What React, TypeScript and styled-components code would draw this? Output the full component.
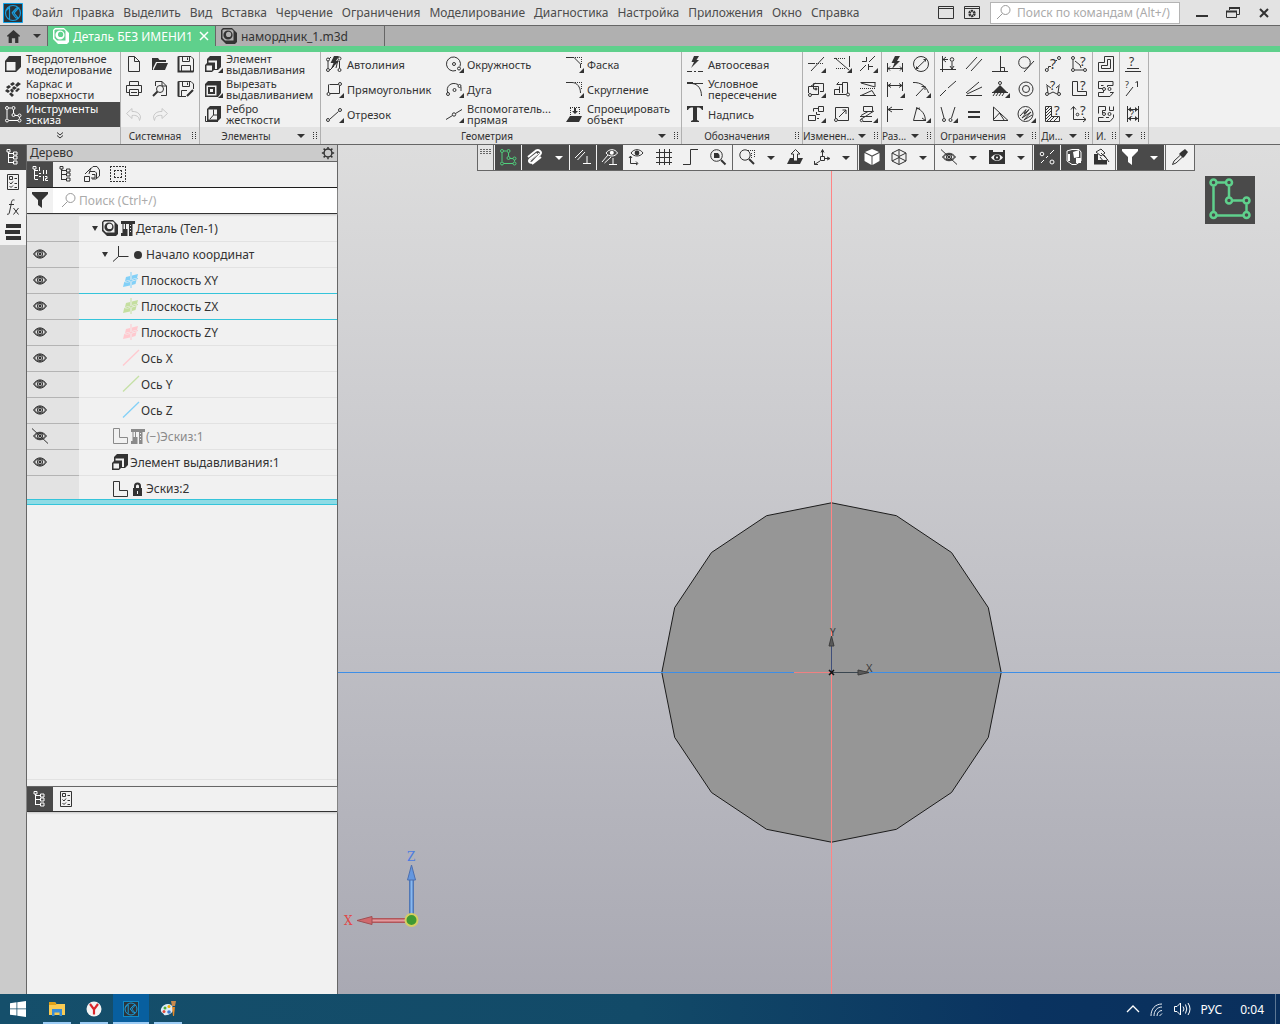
import React from "react";
import styled, { createGlobalStyle, css } from "styled-components";

const ink = "#333333";
const dark = "#4a4a4a";
const line = "#666666";
const paper = "#f1f1f1";
const green = "#5fd08c";
const cyan = "#35c4da";

const Global = createGlobalStyle`
  *, *::before, *::after { box-sizing: border-box; }
  body { margin: 0; }
  body, button, input {
    font-family: "Noto Sans", "Open Sans", sans-serif;
    font-size: 12px;
    color: ${ink};
  }
  button { padding: 0; border: 0; background: none; cursor: default; white-space: nowrap; }
  ul { margin: 0; padding: 0; list-style: none; }
  svg { display: block; flex: none; }
`;

/* ---------- icons ---------- */

const c = (x: number, y: number, r: number) =>
  `M${x - r} ${y}a${r} ${r} 0 1 0 ${2 * r} 0a${r} ${r} 0 1 0 ${-2 * r} 0`;

type Glyph = {
  s?: string;
  f?: string;
  w?: string;
  f2?: string;
  w2?: string;
  b?: string;
  dots?: string;
  dash?: string;
  more?: boolean;
  q?: [number, number, number];
};

const bolt = "M8 0H13L10 5H13L5 13L7.500 7H4.500Z";

const extrude: Glyph = {
  f: "M2 3L5 0H16V11L13 14H2Z",
  w: "M3.500 4.500H12V13H3.500Z",
  f2: "M0 9L2.500 6.500H10V13L7 16H0Z",
  w2: "M1.500 9.500H7V14.500H1.500Z",
};

const glyphs: Record<string, Glyph> = {
  solid: { f: "M0 5L4 0H16V11L11 16H0ZM1.500 6V14.500H10.500V6Z" },
  surface: { f: "M5 3L8 1L10 3L7 5ZM10 4L13 1L16 3L12 6ZM1 6L4 4L6 6L3 8ZM7 7L9 5L12 7L9 9ZM0 10L2 8L5 10L3 12ZM5 9L7 7.500L9 10L7 12ZM10 10L13 7L15 8L12 11ZM4 13L6 11.500L9 14L7 16Z" },
  sketch: { s: `M2 4V12.500M4 2H6.500M8.500 4V7.500M10 9.500H13M14.500 11V12.500M4 14.500H13${c(2, 2, 1.5)}${c(8.5, 2, 1.5)}${c(8.5, 9, 1.5)}${c(14.5, 9.5, 1.5)}${c(2, 14.5, 1.5)}${c(14.5, 14.5, 1.5)}` },
  doc: { s: "M2.500 .5H8.500L13.500 5.500V15.500H2.500ZM8.500 .5V5.500H13.500" },
  open: { f: "M0 2H6L7.500 4H14V6H4L1 12V14H0ZM5 7H16L13 14H1.500Z" },
  save: { s: "M.5 .5H13L15.500 3V15.500H.5ZM4.500 .5V5.500H11.500V.5M9.500 1.500V4M3.500 15.500V9.500H12.500V15.500", b: "M.5 .5V15.500H15.500" },
  print: { s: "M3.500 4.500V.5H12.500V4.500M3 11.500H.5V4.500H15.500V11.500H13M3.500 8.500H12.500V14.500H3.500ZM5 11.500H11" },
  preview: { s: `M3.500 5V.5H10L14.500 5V14.500H9M10 .5V5H14.500${c(8, 8, 3.5)}`, b: "M5.500 10.500L1 15" },
  saveas: { s: "M8 15.500H.5V.5H13L15.500 3V8M4.500 .5V5.500H11.500V.5M9.500 1.500V4M3.500 15.500V9.500H9", b: "M9 15L15 9M.5 .5V15.500" },
  undo: { s: "M6 2.500L.5 7.500L6 12.500V9.500C10 9 13 10 13.500 14.500C16.500 9.500 12 5 6 5.500Z" },
  redo: { s: "M10 2.500L15.500 7.500L10 12.500V9.500C6 9 3 10 2.500 14.500C-.5 9.500 4 5 10 5.500Z" },
  extrude: { ...extrude, more: true },
  extrudeNode: extrude,
  cut: { f: "M0 3L3 0H16V12L13 16H0ZM1.500 4.500V14.500H11.500V4.500ZM3 6H10V13H3ZM5 8V11H8V8Z", more: true },
  rib: { f: "M2 3L5 0H16V12L13 15H2Z", w: "M3.500 3.500H12V13.500H3.500Z", s: "M8.500 3.500V9L5 13M.5 10V15.500H13M8.500 9H12" },
  autoline: { f: bolt, s: `M2 5V12M13.500 5V12M3 3L5 1M12 4L10 12M4 14L8 10${c(2, 3.5, 1.5)}${c(13.5, 2.5, 1.5)}${c(2, 14, 1.5)}${c(13.5, 14, 1.5)}` },
  rect: { s: `M3.500 3.500H12M2.500 3.500V11.500M13.500 5V12.500H4${c(14, 3, 1.5)}${c(2.5, 13, 1.5)}`, more: true },
  segment: { s: `M4 13L12.500 5.500${c(2, 14, 1.5)}${c(14, 4, 1.5)}`, more: true },
  circle: { s: `M10 14.500a7 7 0 1 1 4-4${c(8, 8, 1.5)}${c(13, 12.5, 1.5)}`, more: true },
  arc: { s: `M2 12C-1 6 5 0 12 3.500M15 6V10${c(2, 13, 1.5)}${c(8.5, 9, 1.5)}${c(13.5, 5, 1.5)}`, more: true },
  auxline: { s: `M0 13.500L6.500 9.500M9.500 7.500L16 3.500${c(8, 8.5, 1.7)}`, more: true },
  chamfer: { s: "M0 1.500H8L14.500 8V12", dots: "M9 1.500H16M15.500 1V9", more: true },
  fillet: { s: "M0 1.500H6C11 1.500 14.500 6 14.500 12", dots: "M9 1.500H16M15.500 1V9", more: true },
  project: { f: "M4 10H16L13 16H0ZM6 5H12L9 8ZM8 2H10V5H8Z", dots: "M4.500 9V1M4 1.500H14M13.500 1V9" },
  autoaxis: { f: "M7 0H12L9.500 4H12L4 12L7 6H4.500Z", s: "M0 15.500H5M7 15.500H9M11 15.500H16" },
  intersect: { s: "M0 2.500H16M5 2.500C11 3 14.500 8 14.500 15", b: "M0 2H6" },
  text: { f: "M0 0H16V4H15C14 2 13 1.500 10 1.500V14L12 15V16H4V15L6 14V1.500C3 1.500 2 2 1 4H0Z" },
  trim: { s: "M0 7.500H7M3 15L16 1", dots: "M8 7.500H16", more: true },
  extend: { s: "M1 2L15 14M15.500 0V11", dots: "M0 2.500H12M2 12.500H12", more: true },
  split: { s: "M0 15L6 9M9 6L15 0M6.500 1V5.500H2M8 10.500H13M8.500 14V8", more: true },
  move: { s: `M.5 5.500H10.500V13.500H3M.5 5.500V12M5.500 2.500H15.500V10.500H12M5.500 2.500V8H9M3 5L8 2${c(2, 14, 1.5)}${c(8, 8, 1)}`, more: true },
  scalec: { s: `M0 13.500H12M.5 13V8.500H5M5.500 12V5.500M8.500 12V1.500H13.500V12M3 3.500H8M5 1L2.500 3.500${c(14, 13.5, 1.5)}` },
  mirror: { s: "M.5 1.500H15.500M1 2L15 6V1.500M1 14.500L12 9.500L15 14.500ZM0 14.500H16", dots: "M0 7.500H16" },
  copy: { s: "M5.500 5.500V2.500H10M10.500 .5H15.500V5.500H10.500ZM8.500 6V8.500H12M.5 9.500H7.500V14.500H.5ZM9 12.500H11", more: true },
  scale: { s: `M1.500 12V1.500H14.500V14.500H4M5 11L12 4M8.500 4H12V8${c(2, 14, 1.5)}` },
  deform: { s: `M3.500 5V.5H12.500V5.500H3.500M3 15.500H12M.5 13.500L14 5M0 10.500H12M1 9.500L8 5.500${c(1.5, 14.5, 1.2)}`, more: true },
  autodim: { f: bolt, s: "M.5 7V16M15.500 7V16M1 12.500H15M3 10.500L1 12.500L3 14.500M13 10.500L15 12.500L13 14.500" },
  diameter: { s: `${c(8, 8, 7.5)}M2.500 13.500L14 2.500M3.500 12.500H5.500M3.500 12.500V10.500M12.500 3.500H10.500M12.500 3.500V5.500` },
  lindim: { s: "M.5 1V16M15.500 1V10M1 4.500H15M4 2.500L1 4.500L4 6.500M12 2.500L15 4.500L12 6.500", more: true },
  raddim: { s: "M0 1.500C8 1 14 6 15.500 12M3 15L12 5.500M8.500 5.500H12V9", more: true },
  orddim: { s: "M.5 0V16M1 3.500H16M5 1L1 3.500L5 6" },
  angdim: { s: "M4 1L.5 14.500H13M3.500 2C9 4 12 8 12.500 14.500L9 12M3 3L7 2", more: true },
  coord: { s: `M2.500 0V16M0 13.500H16M3 3.500H8M6 1L3 3.500L6 6M12 6V13M10 10L12 13L14 10${c(12, 3.5, 1.8)}` },
  parallel: { s: "M0 13L11 1M5 15L16 3" },
  perp: { s: "M8.500 0V15M0 15.500H16M9 11.500H12.500V15" },
  tangent: { s: `${c(6.5, 6.5, 5.8)}M6 16L16 5` },
  collinear: { s: "M0 15L6 9M8 7L16 0" },
  merge: { s: "M0 12L13 1M1 13L16 6M0 14.500H16" },
  fix: { f: "M8 4L15 11H1Z", s: `M0 11.500H16M3 12L1 15M6 12L4 15M9 12L7 15M12 12L10 15${c(8, 2, 1.5)}`, more: true },
  concentric: { s: `${c(8, 8, 7)}${c(8, 8, 3.5)}` },
  symmetric: { s: `M1 1L4 12M15 1L11.500 12${c(4, 14, 1.5)}${c(10.5, 14, 1.5)}`, more: true },
  equal: { f: "M2 5H14V7H2ZM2 10H14V12H2Z" },
  bisect: { s: "M1.500 1V14.500H16L1.500 1M1 14L7.500 7L12 14" },
  pattern: { s: `${c(7.5, 8, 7.5)}M2 10L8 3.500L6 8L11 3.500L4 12L13 6L6 14L14 9`, more: true },
  qdist: { s: `M3.500 12.500V10.500H6M12 4.500H10.500${c(1.8, 14, 1.5)}${c(14, 2, 1.5)}`, q: [5, 13, 14] },
  qang: { s: `M2 4V12M4 5L9 9L10 12M4 14H12${c(2, 2, 1.5)}${c(2, 14, 1.5)}${c(14, 14, 1.5)}`, q: [9, 10, 13] },
  qcurve: { s: `M2 5L3 12M14 5L13 12M4 13L8 11L12 13M1 3.500L6 7M15 3.500L11 7${c(2, 13, 1.5)}${c(14, 13, 1.5)}`, q: [5, 9, 12] },
  qlen: { s: "M1.500 .5H6.500V10.500H15.500V14.500H1.500Z", q: [9, 9, 13] },
  qarea: { s: "M.5 .5H6.500V10.500H14.500V15.500H.5ZM1 4L4 1M1 7L6 2M1 10L6 5M1 13L6 8M2 15L7 10M5 15L9 11M9 15L13 11", q: [9, 9, 13] },
  qcent: { s: `M2.500 1V13.500H15M0 3.500L2.500 .5L5 3.500M12 11L15 13.500L12 16${c(6.5, 8.5, 1.3)}`, q: [9, 9, 13] },
  contour: { s: "M6.500 .5H15.500V15.500H.5V6.500H6.500ZM9.500 3.500H12.500V12.500H3.500V9.500H9.500Z" },
  contour2: { s: `M.5 .5H15V4.500H9.500V6M.5 .5V7.500H5M.5 15.500H12L15.500 11.500H12M5.500 4.500H3M.5 15.500V11.500H5.500V9${c(6, 8, 1.5)}${c(11.5, 8, 1.5)}` },
  contour3: { s: `M.5 7.500V.5H7.500V4.500H4.500V7M11.500 .5V4.500H15.500V.5M.5 15.500H12L15.500 11.500V8.500M.5 15.500V11.500H5.500M8 11.500H11${c(6, 8, 1.5)}${c(11.5, 8, 1.5)}` },
  quality: { s: "M2 12.500H14M0 15.500H16", q: [4, 10, 12] },
  fraction: { s: "M1 15L8 6M10.500 1.500L12.500 .5V6", q: [0, 7, 9] },
  qdim: { s: "M2.500 0V16M13.500 0V16M3 3.500H13M3 12.500H13", f: "M3 12.500L6 10V15ZM13 12.500L10 10V15ZM3 3.500L6 1V6ZM13 3.500L10 1V6Z", q: [5, 11, 9] },
  tree: { s: "M3.500 3V14M4 4.500H8M4 8.500H8M4 13.500H8M2 .5H5V3H2ZM8.500 3H12V6H8.500ZM8.500 7H12V10H8.500ZM8.500 12H12V15H8.500Z" },
  treenum: { s: "M2.500 3V13.500M3 4.500H6M3 9.500H6M3 13.500H6M1 .5H4V3H1ZM7.500 1V5M7 7.500H9M7 10.500H9M11.500 4V8M14.500 4V8M11.500 10V15M13 10.500H15V12.500H13.500V14.500H16" },
  props: { s: "M2.500 .5H13.500V15.500H2.500ZM4.500 2.500H7.500V5.500H4.500ZM9.500 4.500H12M4.500 8.500L6 10L8 7.500M9.500 9.500H12M4.500 12L6 13.500L8 11.500M9.500 13.500H12" },
  fx: { s: "M9.500 1C6.500 0 6.500 3 6 6L4.500 13C4 15 3.500 16 2 15M4 5.500H9M8.500 9L13.500 15.500M13.500 9L8.500 15.500" },
  stack: { f: "M1 0H16V4H1ZM0 6H15V10H0ZM1 12H16V16H1Z" },
  parts: { s: "M.5 10.500H5.500V15.500H.5ZM5 8L6.500 3L9 .5H13L15.500 4V10L12 13H8M5.500 5.500H11L12.500 7V12M1 8L7 2M8 8.500H11V12H7" },
  dashsq: { dots: "M0 .5H16M0 15.500H16M.5 0V16M15.500 0V16M4 4.500H12M4 11.500H12M4.500 4V12M11.500 4V12", dash: "2 1" },
  filter: { f: "M0 0H16V2L10 8V16L6 13V8L0 2Z" },
  mag: { s: `${c(9.5, 6, 4.5)}M6.500 9.500L1 15` },
  gear: { b: `${c(9, 8, 4.5)}M9 1V3.500M9 12.500V15M2 8H4.500M13.500 8H16M4 3L6 5M12 11L14 13M14 3L12 5M6 11L4 13` },
  eye: { f: c(8, 8, 3), w: c(8, 8, 2), f2: c(8, 8, 1.4), s: "M1.500 8C5 2.500 11 2.500 14.500 8C11 13.500 5 13.500 1.500 8ZM2.500 8C5 3.500 11 3.500 13.500 8C11 12.500 5 12.500 2.500 8Z" },
  noeye: { f: c(8, 8, 3), w: c(8, 8, 2), f2: c(8, 8, 1.4), s: "M1.500 8C5 3 11 3 14.500 8C11 13 5 13 1.500 8ZM2.500 8C5 4 11 4 13.500 8C11 12 5 12 2.500 8ZM0 .5L16 15.500" },
  part: { f: "M2 0H11L16 5V14L14 16H5L0 11V2Z", w: "M2.500 1.500H11L12.500 3V12.500H4L1.500 10V2.500Z", f2: c(7, 7, 4.6), w2: c(7.6, 6.4, 2.6) },
  frame: { f: "M1 1H15V4H12.500V16H9V4H6V9H7.500V16H1V13H2.500V4H1Z", w: "M10 5H11V6H10ZM10 8H11V9H10ZM10 11H11V12H10ZM3.500 4H5V9H3.500Z" },
  origin: { s: "M6.500 0V10.500H16.500M6.500 10.500L1 15.500" },
  lsketch: { s: "M1.500 .5H7.500V9.500H15.500V15.500H1.500Z" },
  lock: { f: "M3 7H12V15H3Z", b: "M5 8V5a2.500 2.500 0 0 1 5 0V8", w: "M7 10H8V13H7Z" },
  paperclip: { b: "M1 8L9 1.500C12 0 15 3 13.500 5L6 13C3 15 .5 12 3 10L10 4.500M5 15L14 8", s: "M3 12L12 4" },
  constraints: { s: "M0 9L8 1M2.500 11L10 3M12 7V14.500M8 14.500H16" },
  coneye: { s: "M0 13L6 6M2.500 14L9 8M4 4C7-.5 13-.5 15.500 4C13 8 7 8 4 4ZM11 9V15.500M7 15.500H15", f: c(9.8, 3.8, 2) },
  axiseye: { s: "M2 4C5-.5 11-.5 14 4C11 8 5 8 2 4ZM1.500 7V14.500H8M0 9L1.500 7L3 9M7 12.500L9 14.500L7 16", f: c(8, 4, 2.4) },
  grid: { s: "M3.500 0V16M8.500 0V16M13.500 0V16M0 3.500H16M0 8.500H16M0 13.500H16" },
  ortho: { s: "M0 15.500H7.500V.5H15" },
  zoomfit: { s: c(6.5, 6.5, 5.8), b: "M11 11L15.500 15.500", f: "M4 4H8L9.500 6V9H4Z" },
  zoomsel: { s: c(6, 6, 5.2), b: "M10 10L15 15", dots: "M9 1.500H16M15.500 1V9M12.500 4V10" },
  normal: { f: "M3 9H16L13 15H0Z", w: "M7 5H10V12H7Z", s: "M6.500 12V5H4L8.500 .5L13 5H10.500V12Z" },
  axes: { s: "M6.500 7.500H10.500V11.500H6.500ZM8.500 7V1M7 3.500L8.500 .5L10 3.500M11 9.500H15.500M13 8L16 9.500L13 11M6 12L.5 15.500M.5 12V15.500H4" },
  cubewhite: { f: "M8 0L15 3L8 6.500L1 3ZM.5 4L7.500 7.500V16L.5 12ZM8.500 7.500L15.500 4V12L8.500 16Z" },
  wirecube: { s: "M8 .5L15 4V12L8 15.500L1 12V4ZM1 4L8 7.500L15 4M8 7.500V15.500M8 .5V7M1 12L8 8.500L15 12" },
  eyeframe: { f: "M0 1H4V3H14V1H16V15H0Z", w: "M2 8.500C5 4 11 4 14 8.500C11 13 5 13 2 8.500Z", b: c(8, 8.5, 2) },
  points: { s: `M2 14L5 11M7 9L9 7M11 5L15 1${c(3, 5, 1.8)}${c(13, 13, 2)}` },
  solids: { s: "M1 2L6 .5H13L15 3V12L10 15.500H6L1 12Z", f: "M7 3L13 1V8L8 9ZM10 9H15V14H10ZM2 5H4V12H2Z" },
  hatched: { f: "M1 5H5V11H14V15.500H1Z", s: "M3 3L8 0L12 4L8 7ZM8 4L15 11M11 6L16 13M7 8L11 13" },
  dropper: { f: "M9 3L13 0L16 3L13 7L11 9L7 5Z", s: "M8.500 6L2 12L.5 15.500L4 14L10.500 8" },
  house: { f: "M0 7L8 0L16 7V8H14V16H10V10H6V16H2V8H0Z" },
};

const Svg = styled.svg<{ $slim?: boolean }>`
  width: ${(p) => (p.$slim ? 16 : 18)}px;
  height: 17px;
  overflow: visible;
`;

type IconProps = { name: string; color?: string; hole?: string; slim?: boolean };

function Icon({ name, color = ink, hole = paper, slim }: IconProps) {
  const g = glyphs[name];
  return (
    <Svg viewBox={slim ? "0 0 16 17" : "0 0 18 17"} aria-hidden="true" $slim={slim}>
      {g.f && <path d={g.f} fill={color} fillRule="evenodd" />}
      {g.w && <path d={g.w} fill={hole} />}
      {g.f2 && <path d={g.f2} fill={color} />}
      {g.w2 && <path d={g.w2} fill={hole} />}
      {g.s && <path d={g.s} fill="none" stroke={color} />}
      {g.b && <path d={g.b} fill="none" stroke={color} strokeWidth="2" />}
      {g.dots && <path d={g.dots} fill="none" stroke={color} strokeDasharray={g.dash ?? "1 1"} />}
      {g.q && (
        <text x={g.q[0]} y={g.q[1]} fontSize={g.q[2]} fill={color}>?</text>
      )}
      {g.more && <path d="M18 12V17H13Z" fill={ink} />}
    </Svg>
  );
}

function Logo({ size }: { size: number }) {
  return (
    <svg width={size} height={size} viewBox="0 0 20 20" aria-hidden="true">
      <path d="M.5 .5H19.500V19.500H.5Z" fill="#2c3338" stroke="#12a4ea" />
      <path d={`${c(10, 10, 7.5)}M6.500 4V16M9 10L13.500 5H15.500L11 10L15 15H13L9 10M2.500 8L6 5`} fill="none" stroke="#199fe0" strokeWidth="1.200" />
    </svg>
  );
}

const Caret = styled.span<{ $light?: boolean }>`
  width: 0;
  height: 0;
  border: 4px solid transparent;
  border-top-color: ${(p) => (p.$light ? "#ffffff" : ink)};
  border-bottom-width: 0;
`;

/* ---------- top bars ---------- */

const Page = styled.div`
  display: flex;
  flex-direction: column;
  min-height: 100vh;
  background: ${paper};
`;

const MenuBar = styled.header`
  display: flex;
  align-items: center;
  height: 26px;
  padding: 0 8px 0 3px;
  background: #e3e3e3;
  border-bottom: 1px solid ${line};
`;

const Menu = styled.nav`
  display: flex;
  flex: 1;
  gap: 9px;
  padding-left: 9px;
  button { color: #4c4c4c; line-height: 16px; }
`;

const WindowTools = styled.div`
  display: flex;
  align-items: center;
  gap: 10px;
`;

const CommandSearch = styled.label`
  display: flex;
  align-items: center;
  gap: 3px;
  width: 190px;
  height: 22px;
  padding-left: 5px;
  background: #fff;
  border: 1px solid #b4b4b4;
`;

const PlainInput = styled.input`
  flex: 1;
  min-width: 0;
  padding: 0;
  border: 0;
  outline: 0;
  background: transparent;
  &::placeholder { color: #ababab; opacity: 1; }
`;

const WindowButtons = styled.div`
  display: flex;
  gap: 15px;
  padding-left: 4px;
`;

const TabBar = styled.div`
  display: flex;
  height: 20px;
  background: #b0b0b0;
`;

const HomeTab = styled.div`
  display: flex;
  align-items: center;
  gap: 12px;
  width: 48px;
  padding-left: 6px;
  border-right: 1px solid ${line};
`;

const Tab = styled.div<{ $active?: boolean }>`
  display: flex;
  align-items: center;
  gap: 2px;
  width: ${(p) => (p.$active ? 168 : 169)}px;
  padding: 0 5px;
  border-right: 1px solid ${line};
  color: ${(p) => (p.$active ? "#ffffff" : ink)};
  background: ${(p) => (p.$active ? green : "transparent")};
  button { color: inherit; }
  button:first-of-type { flex: 1; text-align: left; }
`;

const GreenStrip = styled.div`
  height: 6px;
  background: ${green};
`;

/* ---------- ribbon ---------- */

const Ribbon = styled.div`
  display: flex;
  height: 93px;
  background: linear-gradient(${paper} 75px, #e3e3e3 75px);
  border-bottom: 1px solid ${line};
`;

const Group = styled.section`
  display: flex;
  flex-direction: column;
  border-right: 1px solid #b0b0b0;
`;

const Cells = styled.div<{ $cols: number; $cell: number }>`
  display: grid;
  grid-auto-flow: column;
  grid-template-rows: repeat(3, 25px);
  grid-template-columns: repeat(${(p) => p.$cols}, ${(p) => p.$cell}px);
`;

const Cell = styled.button<{ $active?: boolean }>`
  display: flex;
  align-items: center;
  gap: 3px;
  padding-left: 5px;
  text-align: left;
  font-size: 11px;
  line-height: 11px;
  ${(p) => p.$active && css`
    color: #fff;
    background: ${dark};
  `}
`;

const CellLabel = styled.span`
  padding-bottom: 1px;
  white-space: pre;
`;

const GroupFoot = styled.div`
  display: flex;
  align-items: center;
  height: 17px;
  font-size: 10px;
  line-height: 16px;
`;

const FootLabel = styled.span`
  flex: 1;
  width: 0;
  min-width: 0;
  text-align: center;
  white-space: nowrap;
`;

const FootMenu = styled.button`
  display: flex;
  flex: none;
  justify-content: center;
  width: 18px;
`;

const GripSvg = styled.svg`
  width: 10px;
  height: 8px;
`;

function Grip() {
  return (
    <GripSvg viewBox="0 0 10 8" aria-hidden="true">
      <path d="M3.500 0V8M6.500 0V8" stroke={ink} strokeDasharray="1 1" fill="none" />
    </GripSvg>
  );
}

type Item = [icon: string, label: string, hidden?: boolean];
type GroupData = { title: string; cols: number; cell: number; menu: boolean; items: Item[] };

const quiet = (labels: string) => labels.split(" ").map((n): Item => [n, n, true]);

const groups: GroupData[] = [
  { title: "Системная", cols: 3, cell: 26, menu: false, items: quiet("doc print undo open preview redo save saveas") },
  { title: "Элементы", cols: 1, cell: 120, menu: true, items: [["extrude", "Элемент\nвыдавливания"], ["cut", "Вырезать\nвыдавливанием"], ["rib", "Ребро\nжесткости"]] },
  {
    title: "Геометрия", cols: 3, cell: 120, menu: true,
    items: [
      ["autoline", "Автолиния"], ["rect", "Прямоугольник"], ["segment", "Отрезок"],
      ["circle", "Окружность"], ["arc", "Дуга"], ["auxline", "Вспомогатель...\nпрямая"],
      ["chamfer", "Фаска"], ["fillet", "Скругление"], ["project", "Спроецировать\nобъект"],
    ],
  },
  { title: "Обозначения", cols: 1, cell: 120, menu: false, items: [["autoaxis", "Автоосевая"], ["intersect", "Условное\nпересечение"], ["text", "Надпись"]] },
  { title: "Изменен...", cols: 3, cell: 26, menu: true, items: quiet("trim move copy extend scalec scale split mirror deform") },
  { title: "Раз...", cols: 2, cell: 26, menu: true, items: quiet("autodim lindim orddim diameter raddim angdim") },
  { title: "Ограничения", cols: 4, cell: 26, menu: true, items: quiet("coord collinear symmetric parallel merge equal perp fix bisect tangent concentric pattern") },
  { title: "Ди...", cols: 2, cell: 26, menu: true, items: quiet("qdist qcurve qarea qang qlen qcent") },
  { title: "И.", cols: 1, cell: 26, menu: false, items: quiet("contour contour2 contour3") },
  { title: "", cols: 1, cell: 26, menu: true, items: quiet("quality fraction qdim") },
];

function RibbonGroup({ g }: { g: GroupData }) {
  return (
    <Group>
      <Cells $cols={g.cols} $cell={g.cell}>
        {g.items.map(([icon, label, hidden]) => {
          const off = icon === "undo" || icon === "redo";
          return (
            <Cell key={icon} disabled={off} aria-label={hidden ? label : undefined}>
              <Icon name={icon} color={off ? "#c9c9c9" : ink} />
              {!hidden && <CellLabel>{label}</CellLabel>}
            </Cell>
          );
        })}
      </Cells>
      <GroupFoot>
        {g.title ? <FootLabel>{g.title}</FootLabel> : null}
        {g.menu && <FootMenu aria-label="menu"><Caret /></FootMenu>}
        <Grip />
      </GroupFoot>
    </Group>
  );
}

/* ---------- workspace ---------- */

const Work = styled.main`
  display: flex;
  flex: 1;
`;

const Rail = styled.aside`
  display: flex;
  flex-direction: column;
  width: 26px;
  background: #cbcbcb;
`;

const RailButton = styled.button<{ $active?: boolean }>`
  display: flex;
  align-items: center;
  height: 25px;
  padding-left: 5px;
  background: ${(p) => (p.$active ? dark : paper)};
`;

const Panel = styled.section`
  display: flex;
  flex-direction: column;
  width: 312px;
  border: solid ${line};
  border-width: 0 1px;
`;

const PanelTitle = styled.div`
  display: flex;
  align-items: center;
  justify-content: space-between;
  height: 17px;
  padding-left: 3px;
  line-height: 16px;
  background: #cbcbcb;
  border-bottom: 1px solid ${line};
`;

const PanelTools = styled.div`
  display: flex;
  height: 26px;
  border-bottom: 1px solid #111;
`;

const PanelTool = styled.button<{ $active?: boolean }>`
  display: flex;
  align-items: center;
  width: 26px;
  padding-left: 5px;
  background: ${(p) => (p.$active ? dark : "transparent")};
`;

const SearchRow = styled.div`
  display: flex;
  height: 26px;
  border-bottom: 1px solid ${ink};
  box-shadow: 0 1px 2px #c4c4c4;
  label {
    display: flex;
    flex: 1;
    align-items: center;
    padding-left: 8px;
    background: #fff;
  }
`;

const Tree = styled.ul`
  padding-top: 2px;
  border-bottom: 4px solid #8edbe5;
  box-shadow: 0 1px 0 ${cyan};
`;

const EyeCell = styled.button`
  display: flex;
  align-items: center;
  width: 52px;
  padding: 0 0 0 5px;
  background: #e3e3e3;
  border-bottom: 1px solid #b4b4b4;
`;

const NodeCell = styled.div<{ $indent: number }>`
  display: flex;
  flex: 1;
  align-items: center;
  padding-left: ${(p) => p.$indent}px;
  border-bottom: 1px solid;
  line-height: 16px;
  white-space: nowrap;
`;

const Row = styled.li<{ $mark?: boolean; $dim?: boolean }>`
  display: flex;
  height: 26px;
  color: ${(p) => (p.$dim ? "#8a8a8a" : ink)};
  > ${NodeCell} { border-bottom-color: ${(p) => (p.$mark ? cyan : "#e2e2e2")}; }
  &:last-child { height: 24px; }
  &:last-child > * { padding-top: 3px; border-bottom-color: ${cyan}; }
`;

const Twist = styled(Caret)`
  border-width: 5px 3px 0;
  margin-right: 4px;
`;

const Bullet = styled.span`
  width: 8px;
  height: 8px;
  margin: 0 4px;
  border-radius: 50%;
  background: ${ink};
`;

const Spacer = styled.div`
  flex: 1;
  border-bottom: 1px solid #e2e2e2;
`;

const LowerTools = styled(PanelTools)`
  margin-top: 6px;
  border-top: 1px solid ${line};
  border-bottom-color: ${ink};
  box-shadow: 0 1px 2px #c4c4c4;
`;

const Lower = styled.div`
  height: 182px;
`;

function Plane({ color }: { color: string }) {
  return (
    <Svg viewBox="0 0 18 17" aria-hidden="true">
      <path d="M3 5L7 4V8L2 9ZM9 3.500L15 2L14 6L9 7ZM1 11L7 10V13.500L0 15ZM9 9.500L13.500 8L12.500 12L9 13Z" fill={color} />
      <path d="M8 0V16M1 10.500L15 6.500" stroke={color} />
    </Svg>
  );
}

function Axis({ color }: { color: string }) {
  return (
    <Svg viewBox="0 0 18 17" aria-hidden="true">
      <path d="M0 15.500L16 0" stroke={color} strokeWidth="1.300" />
    </Svg>
  );
}

type Node = { label: string; indent: number; eye?: "eye" | "noeye"; open?: boolean; mark?: boolean; dim?: boolean; art: React.ReactNode };

const nodes: Node[] = [
  { label: "Деталь (Тел-1)", indent: 13, open: true, art: <><Icon name="part" /><Icon name="frame" slim /></> },
  { label: "Начало координат", indent: 23, eye: "eye", open: true, art: <><Icon name="origin" /><Bullet /></> },
  { label: "Плоскость XY", indent: 44, eye: "eye", mark: true, art: <Plane color="#82d0f7" /> },
  { label: "Плоскость ZX", indent: 44, eye: "eye", mark: true, art: <Plane color="#c5dfa0" /> },
  { label: "Плоскость ZY", indent: 44, eye: "eye", art: <Plane color="#ffc9cf" /> },
  { label: "Ось X", indent: 44, eye: "eye", art: <Axis color="#ffc9cf" /> },
  { label: "Ось Y", indent: 44, eye: "eye", art: <Axis color="#c5e0a5" /> },
  { label: "Ось Z", indent: 44, eye: "eye", art: <Axis color="#82d0f7" /> },
  { label: "(−)Эскиз:1", indent: 33, eye: "noeye", dim: true, art: <><Icon name="lsketch" color="#8a8a8a" /><Icon name="frame" color="#8a8a8a" slim /></> },
  { label: "Элемент выдавливания:1", indent: 33, eye: "eye", art: <Icon name="extrudeNode" /> },
  { label: "Эскиз:2", indent: 33, art: <><Icon name="lsketch" /><Icon name="lock" slim /></> },
];

/* ---------- viewport ---------- */

const Viewport = styled.section`
  position: relative;
  flex: 1;
  min-width: 0;
  overflow: hidden;
  background: linear-gradient(#dddddd, #a9a9b3);
`;

const Scene = styled.svg`
  position: absolute;
  inset: 0;
  width: 100%;
  height: 100%;
`;

const ViewBar = styled.div`
  position: absolute;
  top: 0;
  left: 139px;
  display: flex;
  height: 26px;
  background: ${paper};
  border: solid ${line};
  border-width: 0 0 1px 1px;
`;

const ViewGroup = styled.div`
  display: flex;
  gap: 1px;
  padding: 0 1px;
  border-right: 1px solid ${line};
`;

const ViewGrip = styled.div`
  width: 16px;
  padding: 4px 0 0 2px;
  background: #e3e3e3;
  border-right: 1px solid ${line};
`;

const ViewTool = styled.div<{ $on?: boolean }>`
  display: flex;
  background: ${(p) => (p.$on ? dark : "transparent")};
  button { display: flex; align-items: center; }
  button:first-child { width: 26px; padding: 0 0 1px 5px; }
  button:nth-child(2) { width: 21px; justify-content: center; }
`;

type ViewItem = { n: string; on?: boolean; dd?: boolean; color?: string };
const viewGroups: ViewItem[][] = [
  [{ n: "sketch", on: true, color: "#4fd07c" }, { n: "paperclip", on: true, dd: true }, { n: "constraints", on: true }, { n: "coneye", on: true }, { n: "axiseye" }, { n: "grid" }, { n: "ortho" }, { n: "zoomfit" }],
  [{ n: "zoomsel", dd: true }, { n: "normal" }, { n: "axes", dd: true }],
  [{ n: "cubewhite", on: true }, { n: "wirecube", dd: true }],
  [{ n: "noeye", dd: true }, { n: "eyeframe", dd: true }],
  [{ n: "points", on: true }, { n: "solids", on: true }, { n: "hatched" }],
  [{ n: "filter", on: true, dd: true }],
  [{ n: "dropper" }],
];

const SketchMode = styled.button`
  position: absolute;
  top: 31px;
  right: 25px;
  width: 50px;
  height: 48px;
  background: ${dark};
`;

const ngon = Array.from({ length: 16 }, (_, i) => {
  const a = (i * Math.PI) / 8;
  return `${(493.5 + 169.7 * Math.sin(a)).toFixed(1)},${(527.5 - 169.7 * Math.cos(a)).toFixed(1)}`;
}).join(" ");

function Drawing() {
  return (
    <Scene viewBox="0 0 942 849" preserveAspectRatio="xMidYMid slice" role="img" aria-label="Модель">
      <polygon points={ngon} fill="#969696" stroke="#1c1c1c" />
      <path d="M493.500 0V849" stroke="#ff8484" />
      <path d="M-500 527.500H1500" stroke="#3d8ee6" />
      <path d="M456 527.500H493" stroke="#f08080" />
      <path d="M493.500 527V492" stroke="#3f4f7a" />
      <path d="M493.500 527.500H530" stroke="#3a4650" />
      <path d="M493.500 491L496 501H491ZM531 527.500L520 525V530Z" fill="#5a5a5a" stroke="#3c3c3c" />
      <path d="M491 525L496 530M491 530L496 525" stroke="#111" strokeWidth="1.500" />
      <text x="492" y="491" fontSize="10" fill="#3c3c3c">Y</text>
      <text x="528" y="527" fontSize="11" fill="#3c3c3c">X</text>
      <path d="M73.500 774V732" stroke="#5077b5" strokeWidth="5" />
      <path d="M73.500 774V732" stroke="#86b8f0" strokeWidth="2" />
      <path d="M73.500 720L77.500 735H69.500Z" fill="#6497e0" stroke="#4d6fae" />
      <path d="M70 775.500H34" stroke="#b0565b" strokeWidth="5" />
      <path d="M70 775.500H34" stroke="#e59a9e" strokeWidth="2" />
      <path d="M19 775.500L34 771.500V779.500Z" fill="#d0686c" stroke="#a04f53" />
      <circle cx="73.500" cy="775" r="6" fill="#3f9a33" stroke="#d5cf62" strokeWidth="2" />
      <text x="69" y="716" fontSize="12" fill="#4d7ce0" fontFamily="DejaVu Serif, serif">Z</text>
      <text x="6" y="780" fontSize="12" fill="#e04848" fontFamily="DejaVu Serif, serif">X</text>
    </Scene>
  );
}

/* ---------- taskbar ---------- */

const TaskBar = styled.footer`
  display: flex;
  align-items: center;
  height: 30px;
  background: linear-gradient(90deg, #154f6b, #124a68 50%, #0a3360 80%, #0a2f5c);
  color: #fff;
`;

const Task = styled.button<{ $state?: "run" | "active" | "start" }>`
  display: flex;
  align-items: center;
  justify-content: center;
  width: 36px;
  height: 30px;
  margin-right: ${(p) => (p.$state === "start" ? 3 : 1)}px;
  background: ${(p) => (p.$state === "active" ? "#085f9f" : "transparent")};
  ${(p) => p.$state !== "start" && css`
    background-image: linear-gradient(#9cccf5, #9cccf5);
    background-size: ${p.$state === "active" ? 36 : 28}px 2px;
    background-position: center bottom;
    background-repeat: no-repeat;
  `}
`;

const Tray = styled.div`
  display: flex;
  align-items: center;
  gap: 10px;
  height: 100%;
  margin-left: auto;
  margin-right: 4px;
  padding-right: 11px;
  border-right: 1px solid #5c7794;
  button, time { color: #fff; font-size: 12px; }
  time { padding-left: 8px; }
`;

export default function App() {
  return (
    <Page>
      <Global />
      <MenuBar>
        <Logo size={20} />
        <Menu>
          {["Файл", "Правка", "Выделить", "Вид", "Вставка", "Черчение", "Ограничения", "Моделирование", "Диагностика", "Настройка", "Приложения", "Окно", "Справка"].map((m) => (
            <button key={m}>{m}</button>
          ))}
        </Menu>
        <WindowTools>
          <button aria-label="Окно">
            <svg width="16" height="13" viewBox="0 0 16 13"><path d="M.5 .5H15.500V12.500H.5ZM0 2.500H16" fill="none" stroke={ink} /></svg>
          </button>
          <button aria-label="Настройка окна">
            <svg width="16" height="13" viewBox="0 0 16 13"><path d="M.5 .5H15.500V12.500H.5ZM0 2.500H16" fill="none" stroke={ink} /><circle cx="8" cy="7.500" r="2.500" fill="none" stroke={ink} strokeWidth="2.500" strokeDasharray="2 .6" /></svg>
          </button>
          <CommandSearch>
            <Icon name="mag" color="#9a9a9a" />
            <PlainInput aria-label="Поиск по командам" placeholder="Поиск по командам (Alt+/)" />
          </CommandSearch>
          <WindowButtons>
            <button aria-label="Свернуть"><svg width="16" height="14" viewBox="0 0 16 14"><path d="M2 10H14" stroke={ink} strokeWidth="2" /></svg></button>
            <button aria-label="Восстановить"><svg width="16" height="14" viewBox="0 0 16 14"><path d="M4.500 4V1.500H14.500V8.500H12M1.500 5.500H11.500V11.500H1.500Z" fill="none" stroke={ink} /><path d="M4 2H15M1 5.500H12" stroke={ink} strokeWidth="2" /></svg></button>
            <button aria-label="Закрыть"><svg width="16" height="14" viewBox="0 0 16 14"><path d="M4 3L12 11M12 3L4 11" stroke={ink} strokeWidth="2" /></svg></button>
          </WindowButtons>
        </WindowTools>
      </MenuBar>
      <TabBar>
        <HomeTab>
          <svg width="15" height="13" viewBox="0 0 16 16"><path d={glyphs.house.f} fill={ink} /></svg>
          <Caret />
        </HomeTab>
        <Tab $active>
          <Icon name="part" color="#fff" hole={green} />
          <button>Деталь БЕЗ ИМЕНИ1</button>
          <button aria-label="Закрыть вкладку"><svg width="12" height="12" viewBox="0 0 12 12"><path d="M2 2L10 10M10 2L2 10" stroke="#fff" strokeWidth="1.500" /></svg></button>
        </Tab>
        <Tab>
          <Icon name="part" hole="#b0b0b0" />
          <button>намордник_1.m3d</button>
        </Tab>
      </TabBar>
      <GreenStrip />
      <Ribbon>
        <Group>
          <Cells $cols={1} $cell={120}>
            <Cell><Icon name="solid" /><CellLabel>{"Твердотельное\nмоделирование"}</CellLabel></Cell>
            <Cell><Icon name="surface" /><CellLabel>{"Каркас и\nповерхности"}</CellLabel></Cell>
            <Cell $active><Icon name="sketch" color="#fff" /><CellLabel>{"Инструменты\nэскиза"}</CellLabel></Cell>
          </Cells>
          <GroupFoot>
            <FootLabel as="button" aria-label="Ещё">
              <svg width="100%" height="7" viewBox="0 0 8 7"><path d="M1 .5L4 3L7 .5M1 3.500L4 6L7 3.500" fill="none" stroke={ink} /></svg>
            </FootLabel>
          </GroupFoot>
        </Group>
        {groups.map((g, i) => <RibbonGroup key={i} g={g} />)}
      </Ribbon>
      <Work>
        <Rail>
          <RailButton $active aria-label="Дерево"><Icon name="tree" color="#fff" /></RailButton>
          <RailButton aria-label="Параметры"><Icon name="props" /></RailButton>
          <RailButton aria-label="Переменные"><Icon name="fx" /></RailButton>
          <RailButton aria-label="Слои"><Icon name="stack" /></RailButton>
        </Rail>
        <Panel>
          <PanelTitle>Дерево<button aria-label="Настройка панели"><svg width="18" height="14" viewBox="0 0 18 16"><path d={glyphs.gear.b} fill="none" stroke={ink} strokeWidth="1.700" /></svg></button></PanelTitle>
          <PanelTools>
            <PanelTool $active aria-label="Структура"><Icon name="treenum" color="#fff" /></PanelTool>
            <PanelTool aria-label="Последовательность"><Icon name="tree" /></PanelTool>
            <PanelTool aria-label="Состав"><Icon name="parts" /></PanelTool>
            <PanelTool aria-label="Выделение"><Icon name="dashsq" /></PanelTool>
          </PanelTools>
          <SearchRow>
            <PanelTool aria-label="Фильтр"><Icon name="filter" /></PanelTool>
            <label><Icon name="mag" color="#9a9a9a" /><PlainInput aria-label="Поиск" placeholder="Поиск (Ctrl+/)" /></label>
          </SearchRow>
          <Tree>
            {nodes.map((n) => (
              <Row key={n.label} $mark={n.mark} $dim={n.dim}>
                <EyeCell aria-label="Видимость">{n.eye && <Icon name={n.eye} />}</EyeCell>
                <NodeCell $indent={n.indent}>
                  {n.open && <Twist />}
                  {n.art}
                  {n.label}
                </NodeCell>
              </Row>
            ))}
          </Tree>
          <Spacer />
          <LowerTools>
            <PanelTool $active aria-label="Дерево"><Icon name="tree" color="#fff" /></PanelTool>
            <PanelTool aria-label="Параметры"><Icon name="props" /></PanelTool>
          </LowerTools>
          <Lower />
        </Panel>
        <Viewport>
          <Drawing />
          <ViewBar>
            <ViewGrip>
              <svg width="12" height="6" viewBox="0 0 12 6"><path d="M0 .5H12M0 2.500H12M0 4.500H12" stroke="#666" strokeDasharray="2 1" /></svg>
            </ViewGrip>
            {viewGroups.map((g, i) => (
              <ViewGroup key={i}>
                {g.map((t) => (
                  <ViewTool key={t.n} $on={t.on}>
                    <button aria-label={t.n}><Icon name={t.n} color={t.color ?? (t.on ? "#fff" : ink)} /></button>
                    {t.dd && <button aria-label={`${t.n} menu`}><Caret $light={t.on} /></button>}
                  </ViewTool>
                ))}
              </ViewGroup>
            ))}
          </ViewBar>
          <SketchMode aria-label="Режим эскиза">
            <svg width="50" height="48" viewBox="0 0 50 48">
              <path d={`M8.500 10V36M11 6.500H21M24 10V21M27 24.500H38M41.500 28V36M12 39.500H38${c(8.5, 6.5, 3)}${c(24, 6.5, 3)}${c(24, 24.5, 3)}${c(41.5, 24.5, 3)}${c(8.5, 39, 3)}${c(41.5, 39, 3)}`} fill="none" stroke={green} strokeWidth="2.500" />
            </svg>
          </SketchMode>
        </Viewport>
      </Work>
      <TaskBar>
        <Task $state="start" aria-label="Пуск"><svg width="16" height="16" viewBox="0 0 16 16"><path d="M0 2.200L6.500 1.300V7.500H0ZM7.300 1.200L16 0V7.500H7.300ZM0 8.300H6.500V14.600L0 13.700ZM7.300 8.300H16V16L7.300 14.800Z" fill="#fff" /></svg></Task>
        <Task $state="run" aria-label="Проводник"><svg width="16" height="14" viewBox="0 0 16 14"><path d="M0 0H6L7.500 2H16V13H0Z" fill="#f9cb54" /><path d="M0 0H6L7.500 3H0Z" fill="#e0a118" /><path d="M3 14V7H13V14H10.500V10.500H5.500V14Z" fill="#3a8dd8" /></svg></Task>
        <Task $state="run" aria-label="Яндекс"><svg width="16" height="16" viewBox="0 0 16 16"><circle cx="8" cy="8" r="7.500" fill="#f4f4f4" /><path d="M4 3L8 8.500L12 3M8 8V13.500" stroke="#d9252a" strokeWidth="2.200" fill="none" /></svg></Task>
        <Task $state="active" aria-label="КОМПАС"><Logo size={16} /></Task>
        <Task $state="run" aria-label="Paint"><svg width="16" height="16" viewBox="0 0 16 16"><path d="M1 8C3 2 12 1 13 7C14 12 8 15 4 14C4 12 0 12 1 8Z" fill="#dcecf7" /><circle cx="5" cy="7" r="1.500" fill="#4caf3a" /><circle cx="9" cy="5.500" r="1.500" fill="#f0b000" /><circle cx="4" cy="10.500" r="1.500" fill="#e24a3a" /><circle cx="9" cy="11" r="1.800" fill="#3978d0" /><path d="M12 6H15L14 15H13Z" fill="#e58a2a" /><path d="M11 0H16L15 5H12Z" fill="#c98a4e" /></svg></Task>
        <Tray>
          <svg width="14" height="14" viewBox="0 0 14 14"><path d="M1 10L7 4L13 10" fill="none" stroke="#fff" strokeWidth="1.300" /></svg>
          <svg width="14" height="16" viewBox="1 0 14 16"><path d="M2 15C2 8 6 3 13 3M5 15C5 10 8 6 13 6M8 15C8 12 10 9.500 13 9.500M10.500 15L13 12.500" fill="none" stroke="#e8eef4" /></svg>
          <svg width="17" height="16" viewBox="0 0 17 16"><path d="M.5 5.500H3L6.500 2V14L3 10.500H.5ZM9 5.500Q11 8 9 10.500M11.500 3.500Q14 8 11.500 12.500M14 2Q18 8 14 14" fill="none" stroke="#fff" /></svg>
          <button>РУС</button>
          <time>0:04</time>
        </Tray>
      </TaskBar>
    </Page>
  );
}
